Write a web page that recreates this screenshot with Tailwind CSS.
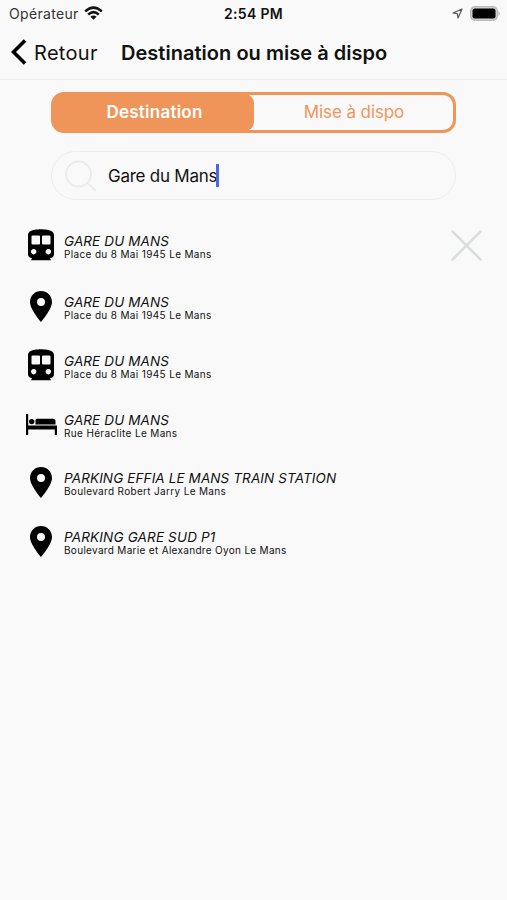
<!DOCTYPE html>
<html lang="fr">
<head>
<meta charset="utf-8">
<title>Destination ou mise à dispo</title>
<script src="https://cdn.jsdelivr.net/npm/@tailwindcss/browser@4"></script>
</head>
<body class="w-[507px] h-[900px] overflow-hidden bg-[#f9f9f9] font-['Inter',sans-serif] text-[#111]">
<svg class="hidden">
  <symbol id="train" viewBox="0 0 26 32"><path fill-rule="evenodd" d="M7 .8C10 0 16 0 19 .8C23.500 1.400 26 3 26 6.500V25C26 27.500 24.500 29 22 29L23 31.200H3L4 29C1.500 29 0 27.500 0 25V6.500C0 3 2.500 1.400 7 .8ZM4.500 6.500Q3.500 6.500 3.500 7.500V14.500Q3.500 15.500 4.500 15.500H11Q12 15.500 12 14.500V7.500Q12 6.500 11 6.500ZM15 6.500Q14 6.500 14 7.500V14.500Q14 15.500 15 15.500H21.500Q22.500 15.500 22.500 14.500V7.500Q22.500 6.500 21.500 6.500ZM5.700 20a2.700 2.700 0 1 0 .01 0ZM20.300 20a2.700 2.700 0 1 0 .01 0Z"/></symbol>
  <symbol id="pin" viewBox="0 0 22 31"><path fill-rule="evenodd" d="M11 0C4.900 0 0 4.900 0 11C0 18.500 11 31 11 31S22 18.500 22 11C22 4.900 17.100 0 11 0ZM11 7a4 4 0 1 1 0 8a4 4 0 1 1 0-8Z"/></symbol>
  <symbol id="bed" viewBox="0 0 31 21"><path d="M0 0H2.200V11.500H31V21H28.800V15.500H2.200V21H0Z"/><circle cx="5.700" cy="7.600" r="2.700"/><path d="M11 4.800H27Q29.500 4.800 29.500 7.500V10.500H9.500V6.300Q9.500 4.800 11 4.800Z"/></symbol>
</svg>

<header class="h-[80px] border-b border-[#eeeeee]">
  <div class="relative h-7 flex items-center justify-between pl-[9px] pr-[7px]">
    <div class="flex items-center gap-[5px]">
      <span class="text-[14px] leading-7 tracking-[0.320px] text-[#333]">Opérateur</span>
      <svg class="w-[19px] h-[14px] -mt-[2px]" viewBox="0 0 19 14" fill="none" stroke="#111" stroke-width="2.600"><path d="M1.200 5.400Q9.500-2.300 17.800 5.400M4.200 8.600Q9.500 3.800 14.800 8.600"/><path d="M6.400 10.800Q9.500 8.300 12.600 10.800L9.500 13.800Z" fill="#111" stroke="none"/></svg>
    </div>
    <span class="absolute inset-x-0 text-center text-[14px] leading-7 tracking-[0.350px] font-semibold">2:54 PM</span>
    <div class="flex items-center gap-[7px] -mt-[2px]">
      <svg class="w-[11px] h-[11px]" viewBox="0 0 11 11" fill="none" stroke="#555" stroke-width="1.200" stroke-linejoin="round"><path d="M10 1L1 5L5.300 5.700L6 10Z"/></svg>
      <svg class="w-[30px] h-[15px]" viewBox="0 0 30 15"><rect x=".7" y=".7" width="26.600" height="13.600" rx="4" fill="#d4d4d4" stroke="#b8b8b8" stroke-width="1.200"/><rect x="2.500" y="2.500" width="23" height="10" rx="2" fill="#000"/><path d="M28.500 5Q31 7.500 28.500 10Z" fill="#aaa"/></svg>
    </div>
  </div>
  <div class="h-[49px] flex items-center pl-[11px]">
    <svg class="w-[16px] h-[26px] -mt-[1px]" viewBox="0 0 16 26" fill="none" stroke="#000" stroke-width="3.600"><path d="M14 1.500L2.500 13L14 24.500"/></svg>
    <span class="ml-[7px] w-[87px] text-[20px] leading-6 tracking-[0.300px] whitespace-nowrap">Retour</span>
    <h1 class="text-[20px] leading-6 tracking-[0.030px] font-semibold whitespace-nowrap">Destination ou mise à dispo</h1>
  </div>
</header>

<main>
  <div class="mt-[12px] ml-[51px] w-[405px] h-[41px] flex rounded-[13px] border-3 border-[#f0955a] text-[17px]">
    <div class="-my-[1px] -ml-[1px] w-[201px] pl-[2px] flex items-center justify-center rounded-[9px] bg-[#f0955a] text-white font-semibold"><span class="tracking-[0.250px]">Destination</span></div>
    <div class="flex-1 pl-[1px] flex items-center justify-center text-[#f0955a]"><span class="tracking-[-0.100px]">Mise à dispo</span></div>
  </div>
  <div class="mt-[18px] ml-[51px] w-[405px] h-[49px] flex items-center rounded-full border border-[#ececec] pl-[13px]">
    <svg class="w-[32px] h-[32px]" viewBox="0 0 32 32" fill="none" stroke="#ebebeb" stroke-width="1.800"><circle cx="13.500" cy="14" r="12.500"/><path d="M22 22.500L31 31"/></svg>
    <span class="ml-[11px] -mr-[1px] text-[17px] leading-6 tracking-[-0.250px]">Gare du Mans</span><span class="w-[3px] h-[23px] bg-[#4468ec]"></span>
  </div>

  <ul class="mt-[14px] pl-[25px]">
    <li class="h-[63px] flex items-center">
      <svg class="mx-[3px] -mt-[1px] w-[26px] h-[32px]"><use href="#train"/></svg>
      <div class="ml-[7px] flex-1 pt-[3px]"><p class="text-[13.500px] leading-[14px] tracking-[0.120px] italic">GARE DU MANS</p><p class="text-[10px] leading-[13px] tracking-[0.350px]">Place du 8 Mai 1945 Le Mans</p></div>
      <svg class="mr-[25px] w-[31px] h-[31px]" viewBox="0 0 31 31" stroke="#dadddd" stroke-width="2.600"><path d="M.8.8L30.200 30.200M30.200.8L.8 30.200"/></svg>
    </li>
    <li class="h-[59.500px] flex items-center">
      <svg class="mx-[5px] w-[22px] h-[31px]"><use href="#pin"/></svg>
      <div class="ml-[7px] pt-[3px]"><p class="text-[13.500px] leading-[14px] tracking-[0.120px] italic">GARE DU MANS</p><p class="text-[10px] leading-[13px] tracking-[0.350px]">Place du 8 Mai 1945 Le Mans</p></div>
    </li>
    <li class="h-[58.600px] flex items-center">
      <svg class="mx-[3px] -mt-[1px] w-[26px] h-[32px]"><use href="#train"/></svg>
      <div class="ml-[7px] pt-[4px]"><p class="text-[13.500px] leading-[14px] tracking-[0.120px] italic">GARE DU MANS</p><p class="text-[10px] leading-[13px] tracking-[0.350px]">Place du 8 Mai 1945 Le Mans</p></div>
    </li>
    <li class="h-[58.600px] flex items-center">
      <svg class="ml-[1px] w-[31px] h-[21px]"><use href="#bed"/></svg>
      <div class="ml-[7px] pt-[4px]"><p class="text-[13.500px] leading-[14px] tracking-[0.120px] italic">GARE DU MANS</p><p class="text-[10px] leading-[13px] tracking-[0.350px]">Rue Héraclite Le Mans</p></div>
    </li>
    <li class="h-[58.600px] flex items-center">
      <svg class="mx-[5px] w-[22px] h-[31px]"><use href="#pin"/></svg>
      <div class="ml-[7px] pt-[4px]"><p class="text-[13.500px] leading-[14px] tracking-[0.110px] italic">PARKING EFFIA LE MANS TRAIN STATION</p><p class="text-[10px] leading-[13px] tracking-[0.330px]">Boulevard Robert Jarry Le Mans</p></div>
    </li>
    <li class="h-[58.600px] flex items-center">
      <svg class="mx-[5px] w-[22px] h-[31px]"><use href="#pin"/></svg>
      <div class="ml-[7px] pt-[4px]"><p class="text-[13.500px] leading-[14px] tracking-[0.160px] italic">PARKING GARE SUD P1</p><p class="text-[10px] leading-[13px] tracking-[0.310px]">Boulevard Marie et Alexandre Oyon Le Mans</p></div>
    </li>
  </ul>
</main>
</body>
</html>
